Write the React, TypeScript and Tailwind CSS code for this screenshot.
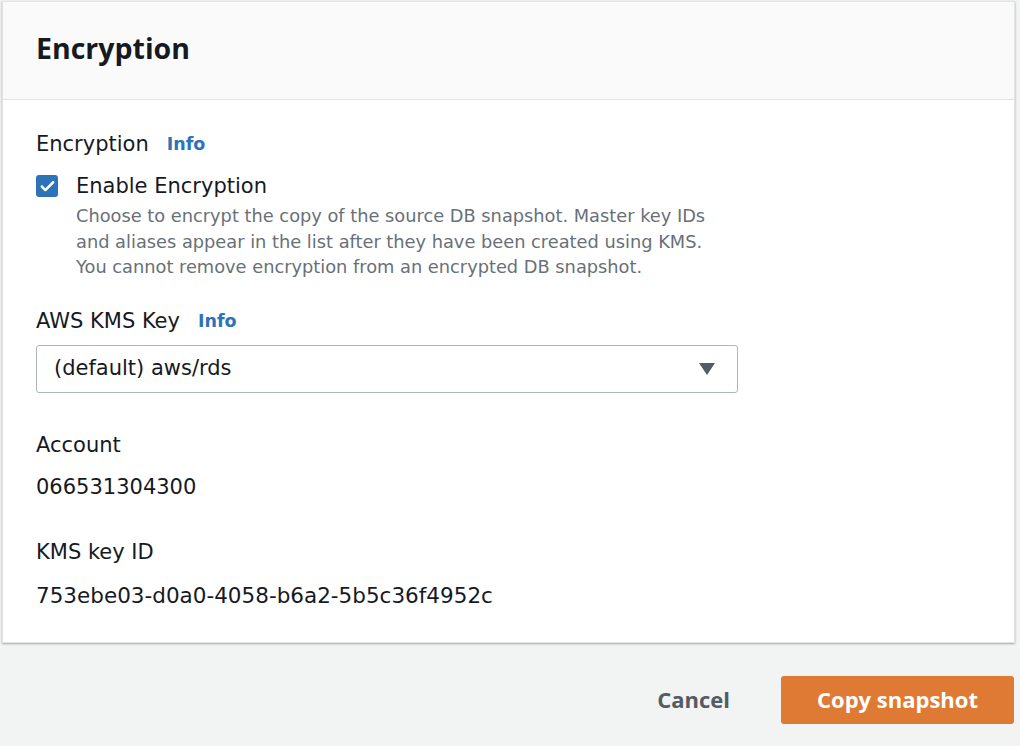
import { Check } from "lucide-react";

const body = { fontFamily: '"DejaVu Sans", "Noto Sans", Arial, sans-serif' };
const bold = { fontFamily: '"Open Sans", "Noto Sans", Arial, sans-serif' };

function Label({ text, info = false }: { text: string; info?: boolean }) {
  return (
    <div className="flex items-center h-[31px] text-[21px] leading-[31px] text-[#16191f]">
      <span>{text}</span>
      {info && <span className="ml-[18px] text-[17.5px] font-bold text-[#2c73b8]">Info</span>}
    </div>
  );
}

export default function App() {
  return (
    <div className="w-[1020px] h-[746px] bg-[#f2f3f3] pt-[1px] px-[2px]" style={body}>
      {/* ── Panel ── */}
      <div className="w-[1013px] bg-white border border-[#e2e4e4] shadow-[0_1px_2px_rgba(0,28,36,0.35)]">
        <div className="h-[98px] bg-[#fafafa] border-b border-[#e2e4e4] flex items-center px-[33px] pb-[4px]">
          <h2 className="text-[28.5px] font-bold text-[#16191f]" style={bold}>Encryption</h2>
        </div>

        <div className="px-[33px] pt-[29px] pb-[31px]">
          <Label text="Encryption" info />

          {/* checkbox + description */}
          <div className="flex mt-[14px]">
            <div className="w-[22px] h-[22px] mt-[1px] rounded-[3px] bg-[#2c73b8] flex items-center justify-center">
              <Check size={17} strokeWidth={3.5} color="white" />
            </div>
            <div className="ml-[18px]">
              <div className="text-[21px] leading-[24px] text-[#16191f]">Enable Encryption</div>
              <p className="text-[17.8px] leading-[25.5px] text-[#687078] mt-[5px] whitespace-nowrap">
                Choose to encrypt the copy of the source DB snapshot. Master key IDs
                <br />
                and aliases appear in the list after they have been created using KMS.
                <br />
                You cannot remove encryption from an encrypted DB snapshot.
              </p>
            </div>
          </div>

          <div className="mt-[26px]">
            <Label text="AWS KMS Key" info />
          </div>
          <div className="mt-[8px] w-[702px] h-[48px] border border-[#aab7b8] rounded-[3px] flex items-center justify-between pl-[17px] pr-[20px]">
            <span className="text-[21px] text-[#16191f]">(default) aws/rds</span>
            <svg width="20" height="14" viewBox="0 0 20 14">
              <path d="M2 1 H18 L10 13 Z" fill="#545b64" />
            </svg>
          </div>

          <div className="mt-[37px]">
            <Label text="Account" />
          </div>
          <div className="mt-[11px] text-[21px] leading-[31px] text-[#16191f]">066531304300</div>

          <div className="mt-[34px]">
            <Label text="KMS key ID" />
          </div>
          <div className="mt-[12px] text-[21.5px] leading-[31px] text-[#16191f]">
            753ebe03-d0a0-4058-b6a2-5b5c36f4952c
          </div>
        </div>
      </div>

      {/* ── Footer buttons ── */}
      <div className="flex justify-end items-center mt-[33px] pr-[4px]" style={bold}>
        <button className="text-[22px] font-bold text-[#545b64] px-[20px] h-[48px]">Cancel</button>
        <button className="ml-[31px] w-[233px] h-[48px] bg-[#df7a35] rounded-[3px] text-[22px] font-bold text-white">
          Copy snapshot
        </button>
      </div>
    </div>
  );
}
